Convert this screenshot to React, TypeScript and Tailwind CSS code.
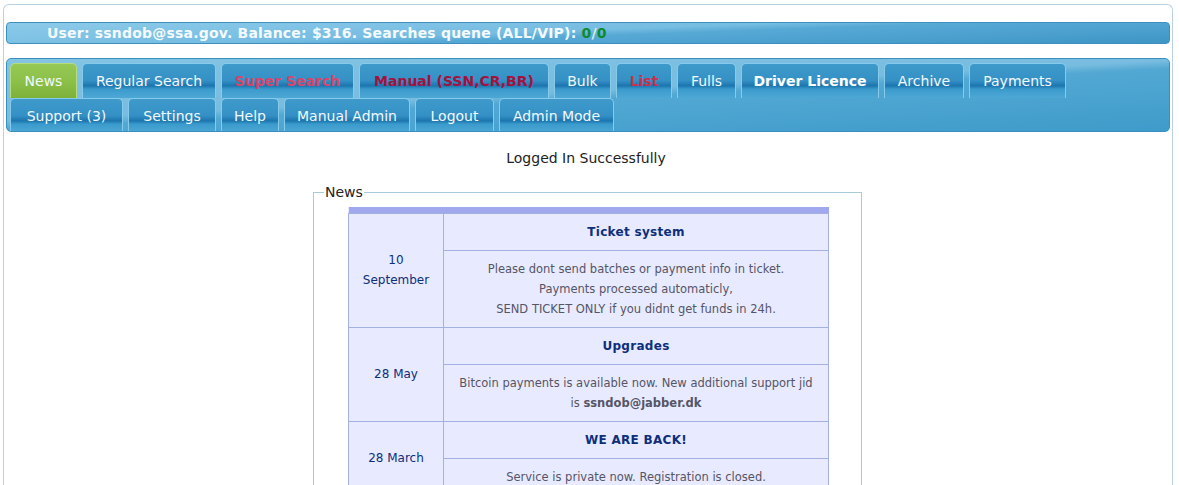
const tabs = [
  { label: 'News', w: 67, active: true },
  { label: 'Regular Search', w: 134 },
  { label: 'Super Search', w: 133, tone: 'text-[#d8456a] font-bold' },
  { label: 'Manual (SSN,CR,BR)', w: 190, tone: 'text-[#a3123f] font-bold' },
  { label: 'Bulk', w: 57 },
  { label: 'List', w: 56, tone: 'text-[#c8324a] font-bold' },
  { label: 'Fulls', w: 59 },
  { label: 'Driver Licence', w: 138, tone: 'text-white font-bold' },
  { label: 'Archive', w: 80 },
  { label: 'Payments', w: 97 },
  { label: 'Support (3)', w: 113 },
  { label: 'Settings', w: 88 },
  { label: 'Help', w: 58 },
  { label: 'Manual Admin', w: 126 },
  { label: 'Logout', w: 79 },
  { label: 'Admin Mode', w: 115 },
];

const news = [
  {
    date: ['10', 'September'],
    title: 'Ticket system',
    body: (
      <>
        Please dont send batches or payment info in ticket.
        <br />
        Payments processed automaticly,
        <br />
        SEND TICKET ONLY if you didnt get funds in 24h.
      </>
    ),
  },
  {
    date: ['28 May'],
    title: 'Upgrades',
    body: (
      <>
        Bitcoin payments is available now. New additional support jid
        <br />
        is <b>ssndob@jabber.dk</b>
      </>
    ),
  },
  {
    date: ['28 March'],
    title: 'WE ARE BACK!',
    body: <>Service is private now. Registration is closed.</>,
  },
];

function Tab({ label, w, active, tone }: { label: string; w: number; active?: boolean; tone?: string }) {
  const skin = active
    ? 'bg-[linear-gradient(to_bottom,#96c955_0%,#8bbf47_55%,#7cb13a_100%)] border-[#b5dc80]'
    : 'bg-[linear-gradient(to_bottom,#3f9acb_0%,#3591c5_48%,#2a84bb_56%,#1c75ae_64%,#3b9bcc_74%,#4ea8d5_100%)] border-[#86cbec]';
  return (
    <div
      className={`h-[35px] flex items-center justify-center rounded-t-[5px] border border-b-0 text-[14px] ${skin} ${tone ?? 'text-[#f2f8fc]'}`}
      style={{ width: w }}
    >
      {label}
    </div>
  );
}

export default function App() {
  return (
    <div className="bg-white min-h-[485px] font-['DejaVu_Sans','Liberation_Sans',sans-serif] pt-[4px]">
      <div className="ml-[3px] w-[1170px] border border-b-0 border-[#b9d1e2] rounded-t-[6px] px-[2px] pt-[17px]">
        {/* status bar */}
        <div className="h-[22px] rounded-[4px] border border-[#3d8fbe] bg-[linear-gradient(178deg,#8ccae8_0%,#76bde2_45%,#57a9d5_55%,#3e96c6_100%)] flex items-center pl-[40px] text-[14px] font-bold tracking-[0.2px] text-[#f4fafd]">
          User: ssndob@ssa.gov. Balance: $316. Searches quene (ALL/VIP):&nbsp;
          <span className="text-[#0f8a2c]">0</span>
          <span className="text-[#d8f0e0]">/</span>
          <span className="text-[#0f8a2c]">0</span>
        </div>

        {/* navigation */}
        <nav className="mt-[14px] h-[74px] overflow-hidden rounded-[5px] border border-[#3b8fc0] bg-[linear-gradient(177deg,#84c4e3_0%,#78bcdf_47%,#52a8d3_53%,#3f9bca_100%)] pl-[3px] pt-[4px] flex flex-wrap content-start gap-x-[5px]">
          {tabs.map((t) => (
            <Tab key={t.label} {...t} />
          ))}
        </nav>

        <p className="text-center text-[14px] text-[#222] mt-[16px] ml-[-4px]">Logged In Successfully</p>

        <fieldset className="mt-[13px] ml-[307px] w-[549px] border border-b-0 border-[#a9cadb] px-0 pb-0">
          <legend className="ml-[10px] px-[1px] text-[14px] text-[#222]">News</legend>
          <table className="ml-[34px] mt-[4px] w-[481px] border-collapse bg-[#e8eaff]">
            <tbody>
              <tr>
                <td colSpan={2} className="h-[6px] p-0 bg-[#a0a9ee]" />
              </tr>
              {news.map((n) => (
                <>
                  <tr key={n.title + 'h'} className="h-[37px]">
                    <td
                      rowSpan={2}
                      className="w-[95px] border border-[#a3b1e0] text-center text-[12px] leading-[20px] text-[#0d2f7c]"
                    >
                      {n.date.map((d) => (
                        <div key={d}>{d}</div>
                      ))}
                    </td>
                    <td className="border border-[#a3b1e0] text-center text-[12px] font-bold tracking-[0.3px] text-[#0d2f7c]">
                      {n.title}
                    </td>
                  </tr>
                  <tr key={n.title + 'b'}>
                    <td className="border border-[#a3b1e0] text-center text-[11.5px] leading-[20px] text-[#555566] py-[8px]">
                      {n.body}
                    </td>
                  </tr>
                </>
              ))}
            </tbody>
          </table>
        </fieldset>
      </div>
    </div>
  );
}
